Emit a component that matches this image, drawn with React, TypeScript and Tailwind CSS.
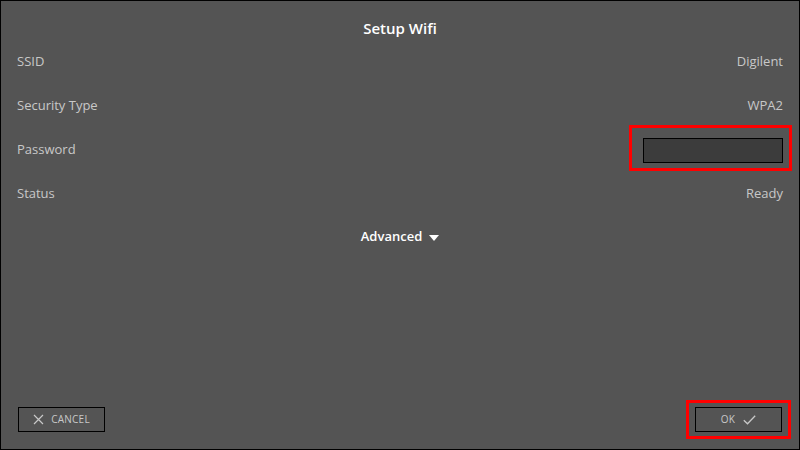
import React from 'react';

type Field = { label: string; value?: string; input?: boolean };

const fields: Field[] = [
  { label: 'SSID', value: 'Digilent' },
  { label: 'Security Type', value: 'WPA2' },
  { label: 'Password', input: true },
  { label: 'Status', value: 'Ready' },
];

const CloseIcon = () => (
  <svg width="11" height="11" viewBox="0 0 11 11" fill="none" stroke="currentColor" strokeWidth="1.2">
    <path d="M1 1 L10 10 M10 1 L1 10" />
  </svg>
);

const CheckIcon = () => (
  <svg width="13" height="10" viewBox="0 0 13 10" fill="none" stroke="currentColor" strokeWidth="1.3">
    <path d="M0.8 5.2 L4.5 8.8 L12.2 0.8" />
  </svg>
);

export default function App() {
  return (
    <div
      className="w-[800px] h-[450px] bg-[#545454] border border-black flex flex-col text-[#c8c8c8]"
      style={{ fontFamily: '"Open Sans", "Noto Sans", sans-serif' }}
    >
      <div className="pt-[17px] h-[39px] text-center text-white font-semibold text-[15px] leading-[20px]">
        Setup Wifi
      </div>

      <div className="flex flex-col px-[16px]">
        {fields.map((f) => (
          <div key={f.label} className="h-[44px] flex items-center justify-between text-[13px]">
            <span>{f.label}</span>
            {f.input ? (
              <div className="relative">
                <input
                  type="password"
                  className="block w-[140px] h-[25px] bg-[#3c3c3c] border border-black outline-none"
                />
                <div className="absolute -left-[14px] -top-[13px] -right-[9px] -bottom-[8px] border-[3px] border-[#ff0000] pointer-events-none" />
              </div>
            ) : (
              <span>{f.value}</span>
            )}
          </div>
        ))}
      </div>

      <div className="h-[42px] flex items-center justify-center gap-[7px] text-white font-semibold text-[13px]">
        <span>Advanced</span>
        <svg width="10" height="6" viewBox="0 0 10 6" className="mt-[1px]">
          <path d="M0 0 H10 L5 6 Z" fill="white" />
        </svg>
      </div>

      <div className="mt-auto mb-[17px] px-[17px] flex justify-between">
        <button className="w-[87px] h-[25px] border border-black flex items-center justify-center gap-[7px] text-[10px] tracking-wide text-[#c8c8c8]">
          <CloseIcon />
          <span>CANCEL</span>
        </button>
        <div className="relative">
          <button className="w-[87px] h-[25px] border border-black flex items-center justify-center gap-[8px] text-[10px] tracking-wide text-[#c8c8c8]">
            <span>OK</span>
            <CheckIcon />
          </button>
          <div className="absolute -left-[9px] -top-[7px] -right-[9px] -bottom-[7px] border-[3px] border-[#ff0000] pointer-events-none" />
        </div>
      </div>
    </div>
  );
}
